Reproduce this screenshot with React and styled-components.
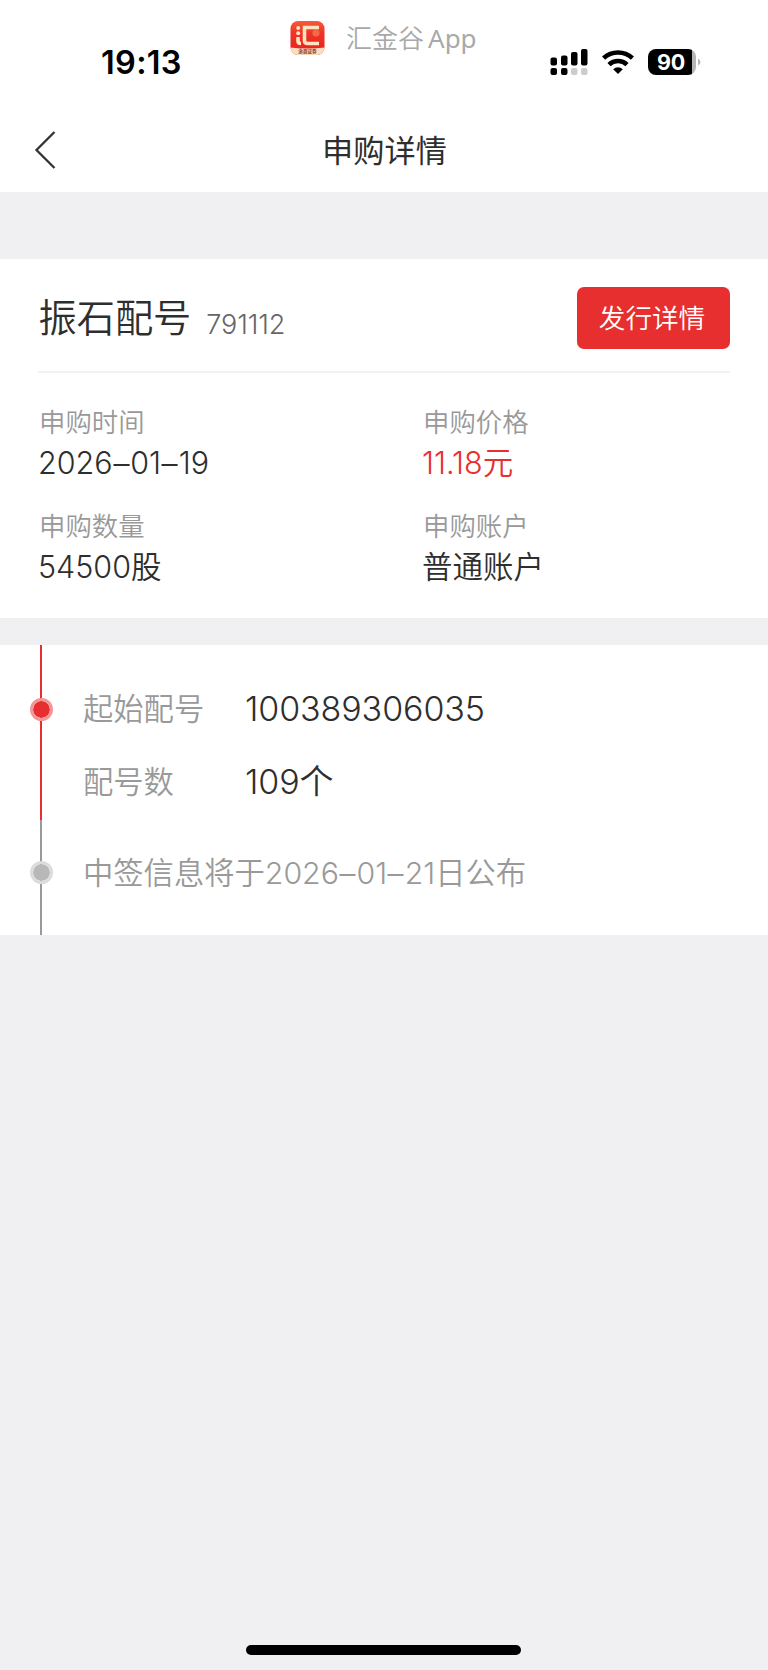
import React from "react";
import styled, { createGlobalStyle } from "styled-components";

const GlobalStyle = createGlobalStyle`
  * {
    box-sizing: border-box;
  }

  body {
    margin: 0;
    background-color: #f0f0f3;
    font-family: Inter, "Noto Sans CJK SC", sans-serif;
    color: #2e2e2e;
  }
`;

const Page = styled.div`
  display: flex;
  flex-direction: column;
  width: 768px;
  height: 1670px;
  overflow: hidden;
`;

const Header = styled.header`
  height: 192px;
  background-color: #fff;
`;

const StatusBar = styled.div`
  display: grid;
  grid-template-columns: 289px 1fr 218px;
  height: 108px;
`;

const Time = styled.div`
  padding: 43px 0 0 101px;
  font-size: 32.5px;
  font-weight: 600;
  line-height: 40px;
  letter-spacing: 0.3px;
  color: #000;
`;

const AppBadge = styled.div`
  display: flex;
  align-items: flex-start;
  padding-top: 20px;
`;

const AppName = styled.span`
  margin-left: 20px;
  font-family: "Noto Sans CJK SC", sans-serif;
  font-size: 26px;
  font-weight: 350;
  line-height: 33px;
  color: #a9a9a9;
`;

const Latin = styled.span`
  margin-left: 4px;
  font-family: "Noto Sans", sans-serif;
  font-weight: 400;
`;

const StatusIcons = styled.div`
  display: flex;
  align-items: flex-start;
  padding-top: 49px;
`;

const Battery = styled.div`
  display: flex;
  align-items: center;
  margin-left: 14px;
`;

const BatteryBody = styled.div`
  width: 48px;
  height: 26px;
  padding-right: 2px;
  border-radius: 8px;
  background: linear-gradient(to right, #000 44px, #b5b5b5 44px);
  color: #fff;
  font-size: 21.5px;
  font-weight: 700;
  line-height: 27px;
  text-align: center;
  letter-spacing: -0.2px;
`;

const NavBar = styled.div`
  display: grid;
  grid-template-columns: 100px 1fr 100px;
  align-items: center;
  height: 84px;
`;

const BackButton = styled.button`
  display: flex;
  padding: 0 0 0 34px;
  border: none;
  background: none;
`;

const Title = styled.h1`
  margin: 0;
  padding: 2px 0 0 1px;
  font-size: 31.2px;
  font-weight: 400;
  line-height: 40px;
  text-align: center;
`;

const Card = styled.section`
  height: 359px;
  margin-top: 67px;
  padding: 0 38px;
  background-color: #fff;
`;

const CardHead = styled.div`
  display: flex;
  align-items: flex-start;
  height: 114px;
  padding-top: 28px;
  border-bottom: 2px solid #f2f2f2;
`;

const StockName = styled.h2`
  margin: 0;
  padding-left: 0.5px;
  font-size: 38.2px;
  font-weight: 350;
  line-height: 62px;
`;

const StockCode = styled.span`
  flex: 1;
  padding: 18px 0 0 15px;
  font-size: 27px;
  font-weight: 300;
  line-height: 40px;
  letter-spacing: -0.1px;
  color: #666;
`;

const DetailButton = styled.button`
  width: 153px;
  height: 62px;
  padding: 0 3px 3px 0;
  border: none;
  border-radius: 7px;
  background-color: #e82f2f;
  color: #fff;
  font-family: inherit;
  font-size: 26.6px;
  font-weight: 350;
`;

const InfoGrid = styled.div`
  display: grid;
  grid-template-columns: 384px 1fr;
  row-gap: 22px;
  padding-top: 29px;
`;

const Label = styled.div`
  padding-left: 1px;
  font-size: 26.4px;
  font-weight: 350;
  line-height: 40px;
  color: #999;
`;

const Value = styled.div`
  font-size: 30.5px;
  font-weight: 350;
  line-height: 42px;
  color: ${(props) => (props.$highlight ? "#e82f2f" : "#2e2e2e")};
`;

const Dash = styled.span`
  display: inline-block;
  margin: 0 1.2px;
  transform: scaleX(1.05);
`;

const Timeline = styled.section`
  margin-top: 27px;
  background-color: #fff;
`;

const Step = styled.div`
  display: flex;
  height: ${(props) => props.$height}px;
  padding-left: 40px;
`;

const Rail = styled.div`
  position: relative;
  width: 2px;
  margin-right: 41px;
  background-color: ${(props) => (props.$active ? "#e82f2f" : "#999")};
`;

const Dot = styled.span`
  position: absolute;
  top: ${(props) => props.$top}px;
  left: -10.5px;
  width: 23px;
  height: 23px;
  border: 3px solid ${(props) => (props.$active ? "#f49696" : "#dcdcdc")};
  border-radius: 50%;
  background-color: ${(props) => (props.$active ? "#e82f2f" : "#b8b8b8")};
  background-clip: padding-box;
`;

const StepBody = styled.div`
  padding-top: ${(props) => props.$top}px;
`;

const StepRow = styled.div`
  display: grid;
  grid-template-columns: 162px auto;
  align-items: center;
  height: 73px;
`;

const StepLabel = styled.span`
  font-size: 30.3px;
  font-weight: 350;
  line-height: 44px;
  color: #999;
`;

const StepValue = styled.span`
  font-size: 34px;
  font-weight: 350;
  line-height: 48px;
  letter-spacing: -0.1px;
`;

const HomeIndicator = styled.div`
  width: 275px;
  height: 10px;
  margin: auto auto 15px 246px;
  border-radius: 5px;
  background-color: #000;
`;

const AppLogo = () => (
  <svg width="37" height="36" viewBox="0 0 37 36">
    <defs>
      <linearGradient id="logoRed" x1="0" y1="0" x2="0" y2="1">
        <stop offset="0" stopColor="#f4603c" />
        <stop offset="0.35" stopColor="#ee3526" />
        <stop offset="1" stopColor="#e81c1c" />
      </linearGradient>
      <clipPath id="logoClip">
        <rect x="1.5" y="1" width="34" height="34" rx="7.5" />
      </clipPath>
    </defs>
    <g clipPath="url(#logoClip)">
      <rect width="37" height="36" fill="url(#logoRed)" />
      <path d="M0 27.5 Q18.5 29.5 37 27.5 V36 H0 Z" fill="#f9dfc0" />
      <circle cx="27" cy="13" r="3.6" fill="#f4694a" />
      <circle cx="9.2" cy="8" r="2" fill="#fde3c0" />
      <circle cx="9.2" cy="13.2" r="2" fill="#fde3c0" />
      <path
        d="M9 17 V21 Q9 23.5 12 23.5 M30 7.5 H15.5 V20.5 Q15.5 23.5 18.5 23.5 H30"
        fill="none"
        stroke="#fde3c0"
        strokeWidth="3.6"
      />
      <text
        x="18.5"
        y="33.2"
        fontSize="4.6"
        fontWeight="700"
        textAnchor="middle"
        fill="#8a3a20"
      >
        浙商证券
      </text>
    </g>
  </svg>
);

const SignalIcon = () => (
  <svg width="38" height="27" viewBox="0 0 38 27">
    <rect x="0.5" y="8.5" width="6.5" height="8" rx="2" />
    <rect x="11" y="6.5" width="6.5" height="10" rx="2" />
    <rect x="21" y="3" width="6.5" height="13.5" rx="2" />
    <rect x="31" y="0" width="6.5" height="16.5" rx="2" />
    <rect x="0.5" y="19" width="6.5" height="7" rx="2" />
    <rect x="11" y="19" width="6.5" height="7" rx="2" />
    <rect x="21" y="19" width="6.5" height="7" rx="2" fill="#ccc" />
    <rect x="31" y="19" width="6.5" height="7" rx="2" fill="#ccc" />
  </svg>
);

const WifiIcon = styled(({ className }) => (
  <svg className={className} width="32" height="26" viewBox="0 0 32 26">
    <g fill="none" stroke="#000" strokeWidth="4.6">
      <path d="M1.6 9.2 A21 21 0 0 1 30.4 9.2" />
      <path d="M7 15.6 A13.2 13.2 0 0 1 25 15.6" />
    </g>
    <path d="M16 25 L11.2 20.3 A6.8 6.8 0 0 1 20.8 20.3 Z" />
  </svg>
))`
  margin-left: 14px;
`;

const BatteryTip = () => (
  <svg width="5" height="8" viewBox="0 0 5 8">
    <path d="M2 0.5 Q4.5 2 4.5 4 Q4.5 6 2 7.5 Z" fill="#b5b5b5" />
  </svg>
);

const BackIcon = () => (
  <svg width="24" height="40" viewBox="0 0 24 40">
    <path
      d="M20.5 2 L2.5 20 L20.5 38"
      fill="none"
      stroke="#333"
      strokeWidth="2.3"
    />
  </svg>
);

const DateText = ({ parts }) =>
  parts.map((part, i) => (
    <React.Fragment key={i}>
      {i > 0 && <Dash>–</Dash>}
      {part}
    </React.Fragment>
  ));

const details = [
  { label: "申购时间", value: <DateText parts={["2026", "01", "19"]} /> },
  { label: "申购价格", value: "11.18元", highlight: true },
  { label: "申购数量", value: "54500股" },
  { label: "申购账户", value: "普通账户" },
];

const App = () => {
  return (
    <>
      <GlobalStyle />
      <Page>
        <Header>
          <StatusBar>
            <Time>19:13</Time>
            <AppBadge>
              <AppLogo />
              <AppName>
                汇金谷<Latin>App</Latin>
              </AppName>
            </AppBadge>
            <StatusIcons>
              <SignalIcon />
              <WifiIcon />
              <Battery>
                <BatteryBody>90</BatteryBody>
                <BatteryTip />
              </Battery>
            </StatusIcons>
          </StatusBar>
          <NavBar>
            <BackButton aria-label="返回">
              <BackIcon />
            </BackButton>
            <Title>申购详情</Title>
          </NavBar>
        </Header>

        <Card>
          <CardHead>
            <StockName>振石配号</StockName>
            <StockCode>791112</StockCode>
            <DetailButton>发行详情</DetailButton>
          </CardHead>
          <InfoGrid>
            {details.map((item) => (
              <div key={item.label}>
                <Label>{item.label}</Label>
                <Value $highlight={item.highlight}>{item.value}</Value>
              </div>
            ))}
          </InfoGrid>
        </Card>

        <Timeline>
          <Step $height={175}>
            <Rail $active>
              <Dot $active $top={52.5} />
            </Rail>
            <StepBody $top={27}>
              <StepRow>
                <StepLabel>起始配号</StepLabel>
                <StepValue>100389306035</StepValue>
              </StepRow>
              <StepRow>
                <StepLabel>配号数</StepLabel>
                <StepValue>109个</StepValue>
              </StepRow>
            </StepBody>
          </Step>
          <Step $height={115}>
            <Rail>
              <Dot $top={41} />
            </Rail>
            <StepBody $top={31}>
              <StepLabel>
                中签信息将于
                <DateText parts={["2026", "01", "21"]} />
                日公布
              </StepLabel>
            </StepBody>
          </Step>
        </Timeline>

        <HomeIndicator />
      </Page>
    </>
  );
};

export default App;
